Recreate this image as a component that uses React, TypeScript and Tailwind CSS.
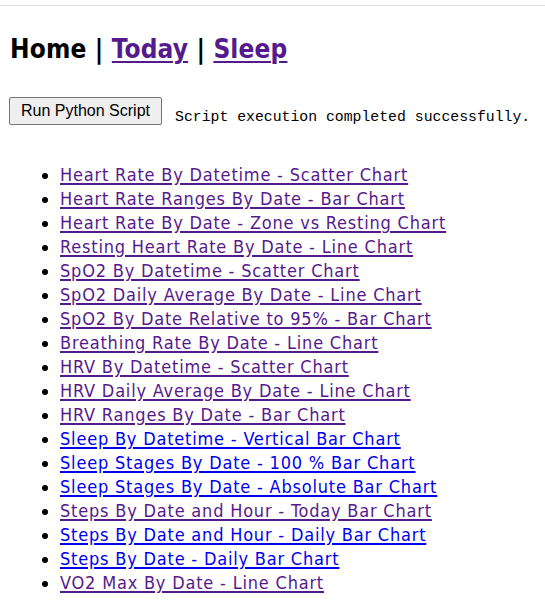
import React from "react";

const V = "#551a8b";
const B = "#0000ee";

const items: [string, boolean][] = [
  ["Heart Rate By Datetime - Scatter Chart", true],
  ["Heart Rate Ranges By Date - Bar Chart", true],
  ["Heart Rate By Date - Zone vs Resting Chart", true],
  ["Resting Heart Rate By Date - Line Chart", true],
  ["SpO2 By Datetime - Scatter Chart", true],
  ["SpO2 Daily Average By Date - Line Chart", true],
  ["SpO2 By Date Relative to 95% - Bar Chart", true],
  ["Breathing Rate By Date - Line Chart", true],
  ["HRV By Datetime - Scatter Chart", true],
  ["HRV Daily Average By Date - Line Chart", true],
  ["HRV Ranges By Date - Bar Chart", true],
  ["Sleep By Datetime - Vertical Bar Chart", false],
  ["Sleep Stages By Date - 100 % Bar Chart", false],
  ["Sleep Stages By Date - Absolute Bar Chart", false],
  ["Steps By Date and Hour - Today Bar Chart", true],
  ["Steps By Date and Hour - Daily Bar Chart", false],
  ["Steps By Date - Daily Bar Chart", false],
  ["VO2 Max By Date - Line Chart", true],
];

export default function App() {
  return (
    <div className="w-[545px] h-[616px] bg-white overflow-hidden" style={{ fontFamily: "'DejaVu Sans Condensed', 'DejaVu Sans', sans-serif" }}>
      <div className="h-[5px]" />
      <div className="border-t border-[#e0e0e0]" />
      <h1 className="mt-[26px] ml-[10px] text-[26px] font-bold leading-[34px] tracking-[0.15px] text-black">
        Home |{" "}
        <a href="#" className="underline decoration-[2px] underline-offset-[3px]" style={{ color: V }}>Today</a> |{" "}
        <a href="#" className="underline decoration-[2px] underline-offset-[3px]" style={{ color: V }}>Sleep</a>
      </h1>
      <div className="mt-[31px] ml-[9px] flex items-start">
        <button
          className="h-[28px] w-[153px] border border-[#767676] bg-[#efefef] rounded-[2px] text-[16px] text-black"
          style={{ fontFamily: "'Liberation Sans', Arial, sans-serif" }}
        >
          Run Python Script
        </button>
        <span
          className="ml-[13px] mt-[11px] text-[14.8px] leading-[18px] text-black"
          style={{ fontFamily: "'Liberation Mono', monospace" }}
        >
          Script execution completed successfully.
        </span>
      </div>
      <ul className="mt-[37px] pl-[60px] list-disc text-[18px] leading-[24px] tracking-[0.8px]">
        {items.map(([t, v]) => (
          <li key={t} className="marker:text-black">
            <a href="#" className="underline decoration-[2px] underline-offset-[2px]" style={{ color: v ? V : B }}>{t}</a>
          </li>
        ))}
      </ul>
    </div>
  );
}
